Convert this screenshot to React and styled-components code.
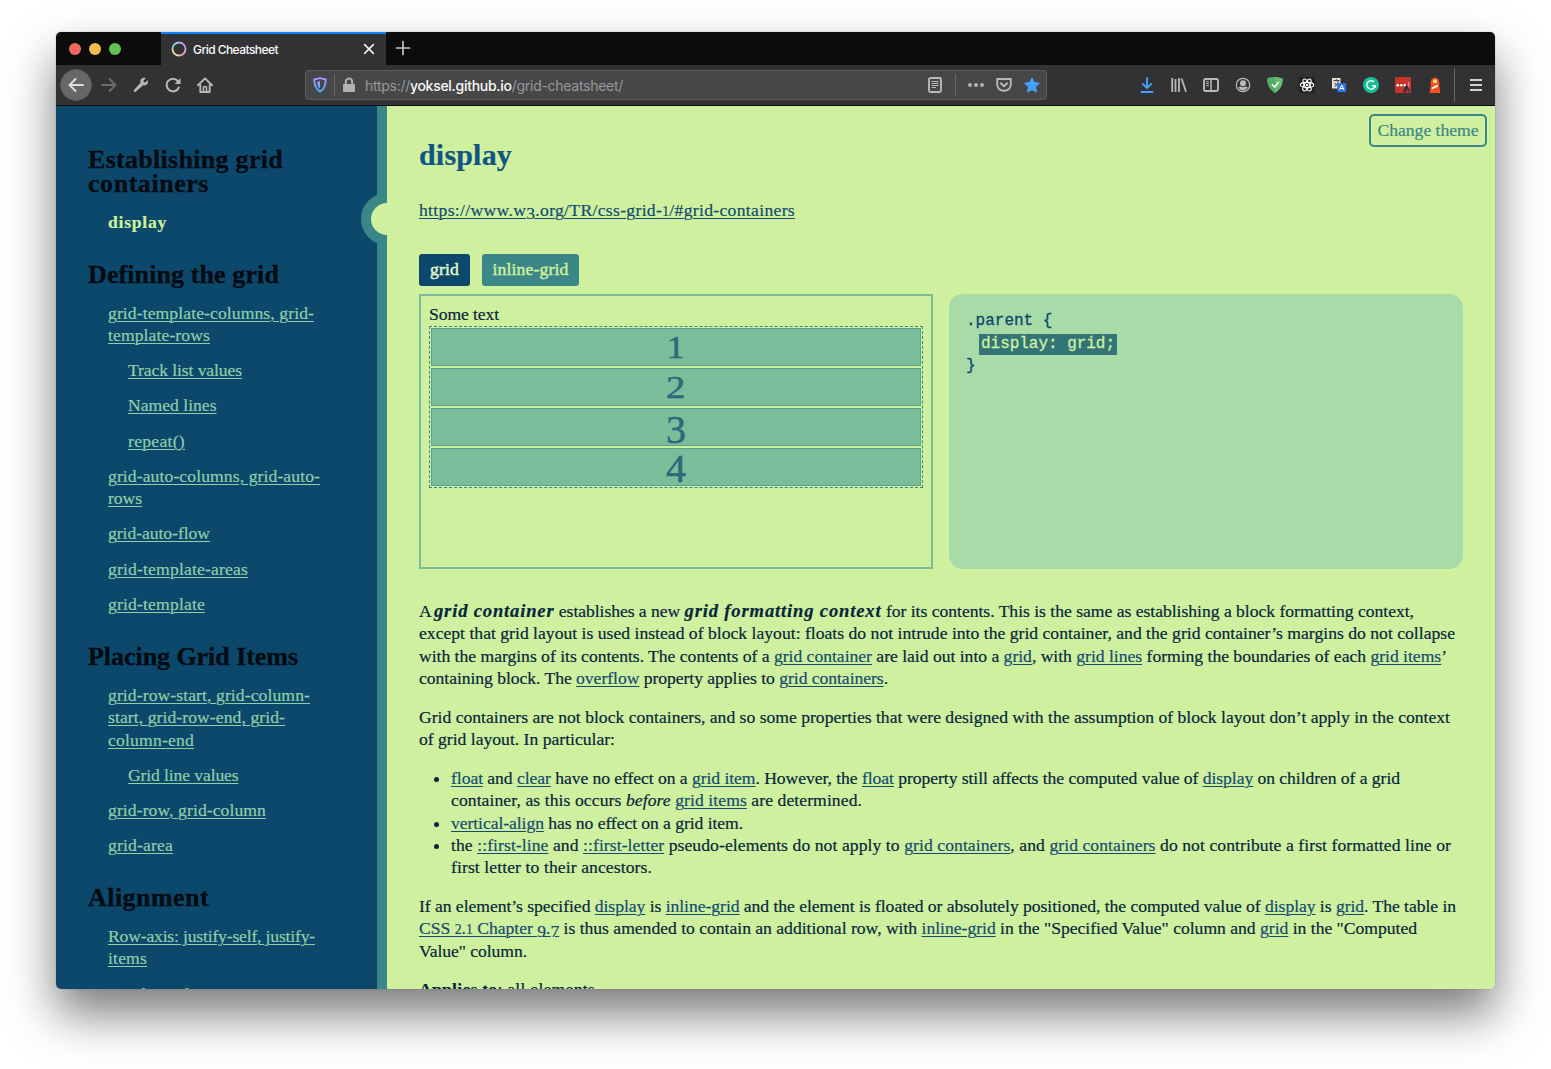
import React, { useLayoutEffect, useRef, useState } from 'react';
import styled, { createGlobalStyle } from 'styled-components';

const c = {
  navy: '#0b486b',
  teal: '#3b8686',
  green: '#79bd9a',
  mint: '#a8dba8',
  lime: '#cff09e',
  ink: '#06263c',
};
const serif = '"Liberation Serif", Georgia, serif';
const ui = 'Inter, Roboto, sans-serif';

const GlobalStyle = createGlobalStyle`
  * { box-sizing: border-box; }
  body { margin: 0; background: #fff; overflow: hidden; }
`;

/* ---------- text tracked to a given measure ---------- */
const FitSpan = styled.span`
  display: inline-block;
  white-space: pre;
`;
function Fit({ w, children }) {
  const ref = useRef(null);
  const [spacing, setSpacing] = useState(0);
  useLayoutEffect(() => {
    const el = ref.current;
    el.style.letterSpacing = '0px';
    const natural = el.getBoundingClientRect().width;
    const value = (w - natural) / el.textContent.length;
    el.style.letterSpacing = `${value}px`;
    setSpacing(value);
  }, [w]);
  return <FitSpan ref={ref} style={{ letterSpacing: `${spacing}px` }}>{children}</FitSpan>;
}

/* ---------- window frame ---------- */
const Desktop = styled.div`
  height: 1069px;
  padding: 32px 56px 80px;
`;
const Window = styled.div`
  width: 1439px;
  height: 957px;
  display: flex;
  flex-direction: column;
  border-radius: 5px;
  overflow: hidden;
  box-shadow: 0 0 1px rgba(0, 0, 0, 0.55), 0 25px 48px rgba(0, 0, 0, 0.52);
`;
const TabBar = styled.div`
  height: 33px;
  flex: none;
  display: flex;
  background: #0c0c0d;
`;
const Lights = styled.div`
  width: 105px;
  display: flex;
  align-items: center;
  gap: 8px;
  padding: 1px 0 0 13px;
`;
const Light = styled.span`
  width: 12px;
  height: 12px;
  border-radius: 50%;
  background: ${(p) => p.$color};
`;
const Tab = styled.div`
  width: 225px;
  display: flex;
  align-items: center;
  padding: 0 10px 1px;
  background: #323234;
  border-top: 2px solid #0a84ff;
  color: #f9f9fa;
  font: 500 12px ${ui};
`;
const TabTitle = styled.span`
  flex: 1;
  padding-left: 6px;
`;
const NewTab = styled.div`
  padding: 8px 0 0 9px;
`;
const Toolbar = styled.div`
  height: 41px;
  flex: none;
  display: flex;
  align-items: center;
  padding: 0 0 1px 4px;
  background: #323234;
  border-bottom: 1px solid #0c0c0d;
`;
const Cell = styled.div`
  width: 32px;
  height: 32px;
  flex: none;
  display: flex;
  align-items: center;
  justify-content: center;
`;
const BackButton = styled(Cell)`
  border-radius: 50%;
  background: #676769;
  border: 1px solid #59595b;
  margin-right: 1px;
`;
const UrlBar = styled.div`
  width: 742px;
  height: 30px;
  flex: none;
  margin: 0 84px 0 84px;
  display: flex;
  align-items: center;
  background: #474749;
  border: 1px solid #5b5b5e;
  border-radius: 3px;
`;
const Slot = styled.div`
  width: ${(p) => p.$w}px;
  display: flex;
  justify-content: center;
`;
const StarSlot = styled(Slot)`
  margin: 0 6px 0 12px;
`;
const Rule = styled.span`
  width: 1px;
  flex: none;
  height: ${(p) => p.$h}px;
  background: #66676b;
`;
const MenuRule = styled(Rule)`
  margin-left: 3px;
`;
const Url = styled.div`
  flex: 1;
  padding: 1px 0 0 2px;
  color: #98989b;
  font: 14px ${ui};
  b { color: #f9f9fa; font-weight: 500; }
`;
const MenuSlot = styled(Cell)`
  width: 41px;
`;

/* ---------- page ---------- */
const Page = styled.div`
  flex: 1;
  min-height: 0;
  display: flex;
  background: ${c.lime};
  font: 17.6px/22.4px ${serif};
`;
const Sidebar = styled.aside`
  position: relative;
  width: 331px;
  flex: none;
  padding: 42px 0 0 32px;
  overflow: hidden;
  background: linear-gradient(to right, ${c.navy} 321px, ${c.teal} 321px);
`;
const Marker = styled.span`
  position: absolute;
  top: 87px;
  right: -26px;
  width: 52px;
  height: 52px;
  border: 10px solid ${c.teal};
  border-radius: 50%;
  background: ${c.lime};
`;
const Section = styled.section`
  margin-bottom: 29.9px;
`;
const Heading = styled.h2`
  margin: 0 0 14.7px;
  font: 700 26px/24px ${serif};
  color: #030b12;
  -webkit-text-stroke: 0.3px currentColor;
`;
const HeadingLine = styled.span`
  display: block;
  height: 24px;
`;
const NavList = styled.ul`
  list-style: none;
  margin: 0;
  padding: 0 0 0 20px;
  display: flex;
  flex-direction: column;
  gap: 12.8px;
`;
const NavItem = styled.li`
  padding-left: ${(p) => (p.$sub ? 20 : 0)}px;
  height: ${(p) => p.$lines * 22.4}px;
`;
const NavLink = styled.a`
  color: ${(p) => (p.$active ? c.lime : '#8fcfa9')};
  font-weight: ${(p) => (p.$active ? 700 : 400)};
  -webkit-text-stroke: 0.2px currentColor;
`;
const NavLine = styled.span`
  display: block;
  height: 22.4px;
  & > span { text-decoration: ${(p) => (p.$plain ? 'none' : 'underline')}; text-underline-offset: 2px; text-decoration-thickness: 1px; }
`;

const Main = styled.main`
  position: relative;
  flex: 1;
  min-width: 0;
  overflow: hidden;
  padding: 32px 32px 0;
  color: ${c.ink};
  -webkit-text-stroke: 0.2px currentColor;
`;
const ThemeButton = styled.button`
  position: absolute;
  top: 8px;
  right: 8px;
  width: 118px;
  height: 33px;
  padding: 0;
  border: 2px solid ${c.teal};
  border-radius: 5px;
  background: transparent;
  color: ${c.teal};
  font: 17.6px ${serif};
  -webkit-text-stroke: 0.2px currentColor;
`;
const Title = styled.h1`
  height: 34px;
  margin: 0 0 27px;
  font: 700 30px/34px ${serif};
  color: #0f5482;
`;
const A = styled.a`
  color: #134b70;
  text-decoration: underline;
  text-decoration-thickness: 1px;
  text-underline-offset: 2px;
`;
const SpecLink = styled.div`
  height: 22px;
  margin-bottom: 33px;
`;
const Buttons = styled.div`
  display: flex;
  gap: 12px;
  margin-bottom: 8px;
`;
const ValueButton = styled.button`
  height: 32px;
  width: ${(p) => p.$w}px;
  padding: 0 0 1px;
  border: 0;
  border-radius: 3px;
  background: ${(p) => (p.$active ? c.navy : c.teal)};
  color: ${(p) => (p.$active ? '#e6f8cb' : c.lime)};
  font: 17.6px ${serif};
  -webkit-text-stroke: 0.45px currentColor;
`;
const Panels = styled.div`
  display: grid;
  grid-template-columns: 1fr 1fr;
  gap: 16px;
  height: 275px;
  margin-bottom: 31px;
`;
const Demo = styled.div`
  border: 2px solid ${c.green};
  padding: 8px;
`;
const DemoLabel = styled.div`
  height: 22px;
  line-height: 20.4px;
`;
const DemoGrid = styled.div`
  display: grid;
  gap: 2px;
  padding: 1px;
  border: 1px dashed ${c.teal};
`;
const DemoItem = styled.div`
  height: 38px;
  display: flex;
  align-items: flex-start;
  justify-content: center;
  background: ${c.green};
  border: 1px solid #5ca18d;
  color: #30687a;
  font-size: ${(p) => p.$size}px;
  line-height: 36px;
  -webkit-text-stroke: 0.5px currentColor;
`;
const DemoDigit = styled.span`
  transform: translateY(${(p) => p.$y}px) scaleX(${(p) => p.$sx});
`;
const Code = styled.pre`
  margin: 0;
  padding: 16px 17px;
  border-radius: 14px;
  background: ${c.mint};
  color: ${c.navy};
  font: 16px/22.6px "Liberation Mono", "Courier New", monospace;
  -webkit-text-stroke: 0.3px currentColor;
`;
const CodeMark = styled.span`
  display: inline-block;
  height: 21px;
  line-height: 20px;
  margin-left: 13px;
  padding: 0 2px;
  background: #337577;
  color: ${c.lime};
`;
const P = styled.p`
  margin: 0 0 16px;
`;
const Row = styled.span`
  display: block;
  height: 22.45px;
`;
const StrongTerm = styled.b`
  font-size: 18.6px;
  line-height: 0;
  font-style: italic;
`;
const List = styled.ul`
  margin: 0 0 16px;
  padding-left: 32px;
`;
const OldDigit = styled.span`
  font-size: ${(p) => (p.$low ? '1em' : '0.78em')};
  line-height: 0;
  vertical-align: ${(p) => (p.$low ? '-0.16em' : 'baseline')};
`;

function Line({ w, children }) {
  return <Row><Fit w={w}>{children}</Fit></Row>;
}

/* ---------- icons ---------- */
const Icon = ({ size = 16, color = '#b9b9bb', sw = 2, children }) => (
  <svg width={size} height={size} viewBox="0 0 16 16" fill="none" stroke={color} strokeWidth={sw} strokeLinecap="round" strokeLinejoin="round">
    {children}
  </svg>
);

const RightIcons = () => (
  <>
    <Cell><Icon color="#45a1ff" sw={1.9}><path d="M8 1v9.500M3.800 6.800L8 11l4.200-4.200M2.500 15h11" /></Icon></Cell>
    <Cell><Icon sw={1.8}><path strokeLinecap="butt" d="M1.200 1v14M4.500 2v13M8 1v14M10.500 1.500l4.500 13.200" /></Icon></Cell>
    <Cell><Icon sw={1.9}><rect x="1" y="2" width="14" height="12" rx="1.500" /><path strokeWidth="1.500" d="M8 2v12" /><path strokeWidth="1" d="M3.500 4.700h2M3.500 6.700h2M3.500 8.700h2" /></Icon></Cell>
    <Cell><Icon sw={1.2}><circle cx="8" cy="8" r="6.700" /><circle cx="8" cy="6.200" r="3" fill="#b9b9bb" stroke="none" /><path fill="#b9b9bb" stroke="none" d="M3.200 10.300c1 .2 1.900-.7 2.600-.7 1 .8 3.400.8 4.400 0 .7 0 1.600.9 2.600.7-1 2-2.700 3.100-4.800 3.100s-3.800-1.100-4.800-3.100z" /></Icon></Cell>
    <Cell><svg width="16" height="16" viewBox="0 0 16 16"><path fill="#68bc71" d="M8 0C5.500 0 2.500.6.200 1.800c0 2.600 0 9.200 7.800 14.200 7.800-5 7.800-11.600 7.800-14.200C13.500.6 10.500 0 8 0z" /><path fill="#4fa55c" d="M8 0C5.500 0 2.500.6.200 1.800c0 2.600 0 9.200 7.800 14.200z" opacity=".7" /><path d="M5 7.300l2.600 2.900L11.700 5" stroke="#fff" strokeWidth="1.500" fill="none" /></svg></Cell>
    <Cell><svg width="16" height="16" viewBox="0 0 16 16" fill="none" stroke="#fff" strokeWidth="1.100"><rect width="16" height="16" fill="#222224" stroke="none" /><ellipse cx="8" cy="8" rx="6.700" ry="2.600" /><ellipse cx="8" cy="8" rx="6.700" ry="2.600" transform="rotate(60 8 8)" /><ellipse cx="8" cy="8" rx="6.700" ry="2.600" transform="rotate(120 8 8)" /><circle cx="8" cy="8" r="1.300" fill="#fff" stroke="none" /></svg></Cell>
    <Cell><svg width="16" height="16" viewBox="0 0 16 16" fill="none"><rect x="1" y="1" width="8.500" height="10.500" fill="#e7e2d2" /><path d="M2.500 3.500h6M5.300 2v1.500M3.500 9.500c2-1 3.500-3 3.700-6M3.700 5.500c.8 2 2 3 3.800 4" stroke="#3e4143" strokeWidth="1" /><rect x="6.300" y="6.200" width="8.800" height="8.800" fill="#2f73e8" /><path d="M8.700 13l2-4.800h.3l2 4.800M9.400 11.500h2.900" stroke="#fff" strokeWidth="1" /></svg></Cell>
    <Cell><svg width="16" height="16" viewBox="0 0 16 16" fill="none"><circle cx="8" cy="8" r="8" fill="#15c39a" /><path d="M10.900 4.800A4.200 4.200 0 1 0 12.200 8.700H9" stroke="#fff" strokeWidth="1.400" /><path d="M12.300 8.200v2.600" stroke="#fff" strokeWidth="1" /></svg></Cell>
    <Cell><svg width="16" height="16" viewBox="0 0 16 16"><rect width="16" height="16" rx="1" fill="#c5352e" /><circle cx="2.800" cy="8.300" r="1.300" fill="#fff" /><circle cx="6.300" cy="8.300" r="1.300" fill="#fff" /><circle cx="9.800" cy="8.300" r="1.300" fill="#fff" /><path d="M13.700 5v5" stroke="#f2b0a8" strokeWidth=".8" /><path d="M8 15l1.600-4 1.500-3.200 1.600 1.700 2.300 5.500-1.800-.5-1.300-3-1.500 4.300z" fill="#24303f" /></svg></Cell>
    <Cell><svg width="16" height="16" viewBox="0 0 16 16"><path fill="#f4511e" d="M8 .2l4 2.500v3h.8v1.600H12l1.200 7.200V16H2.800v-1.500L4 7.300h-.8V5.700H4v-3z" /><circle cx="8" cy="4.300" r="2" fill="#ffe082" /><path fill="#fff" d="M5 10.200l5.700-2.500.2 2L4.600 12.600z" /></svg></Cell>
  </>
);

const nav = [
  { title: ['Establishing grid', 'containers'], widths: [195, 121], items: [{ lines: [['display', 59]], active: true }] },
  {
    title: ['Defining the grid'], widths: [191],
    items: [
      { lines: [['grid-template-columns, grid-', 206], ['template-rows', 102]] },
      { lines: [['Track list values', 114]], sub: true },
      { lines: [['Named lines', 88.5]], sub: true },
      { lines: [['repeat()', 57]], sub: true },
      { lines: [['grid-auto-columns, grid-auto-', 212], ['rows', 34]] },
      { lines: [['grid-auto-flow', 102]] },
      { lines: [['grid-template-areas', 140]] },
      { lines: [['grid-template', 97]] },
    ],
  },
  {
    title: ['Placing Grid Items'], widths: [210],
    items: [
      { lines: [['grid-row-start, grid-column-', 202], ['start, grid-row-end, grid-', 177], ['column-end', 86]] },
      { lines: [['Grid line values', 110.5]], sub: true },
      { lines: [['grid-row, grid-column', 158]] },
      { lines: [['grid-area', 65]] },
    ],
  },
  {
    title: ['Alignment'], widths: [121],
    items: [
      { lines: [['Row-axis: justify-self, justify-', 207], ['items', 39]] },
      { lines: [['Aligned', 62]], sub: true },
    ],
  },
];

const digits = [
  { n: 1, size: 31, y: 0.5, sx: 1.15 },
  { n: 2, size: 31, y: 0.5, sx: 1.25 },
  { n: 3, size: 40, y: 2.5, sx: 1 },
  { n: 4, size: 40, y: 2, sx: 1 },
];

export default function App() {
  return (
    <>
      <GlobalStyle />
      <Desktop>
        <Window>
          <TabBar>
            <Lights>
              <Light $color="#ee6a5f" /><Light $color="#f5bd4f" /><Light $color="#61c454" />
            </Lights>
            <Tab>
              <svg width="16" height="16" viewBox="0 0 16 16" fill="none" strokeWidth="1.800">
                <path d="M1.500 8A6.500 6.500 0 0 1 8 1.500" stroke="#86cfe6" />
                <path d="M8 1.500A6.500 6.500 0 0 1 14.500 8" stroke="#b7a0e8" />
                <path d="M14.500 8A6.500 6.500 0 0 1 8 14.500" stroke="#eba7c4" />
                <path d="M8 14.500A6.500 6.500 0 0 1 1.500 8" stroke="#f0d79a" />
              </svg>
              <TabTitle><Fit w={85}>Grid Cheatsheet</Fit></TabTitle>
              <Icon size={14} color="#f0f0f1" sw={1.9}><path d="M3 3l10 10M13 3L3 13" /></Icon>
            </Tab>
            <NewTab><Icon color="#c4c4c6" sw={1.7}><path d="M8 1.500v13M1.500 8h13" /></Icon></NewTab>
          </TabBar>
          <Toolbar>
            <BackButton><Icon color="#dededf" sw={1.9}><path d="M15 8H1.500M7.500 2L1.500 8l6 6" /></Icon></BackButton>
            <Cell><Icon color="#6c6c6e" sw={1.9}><path d="M1 8h13.500M8.500 2l6 6-6 6" /></Icon></Cell>
            <Cell><svg width="16" height="16" viewBox="0 0 16 16" fill="#b9b9bb"><path d="M14.700 3.200l-2.500 2.300-1.500-.3-.3-1.500 2.300-2.500C10.900.4 8.900.9 7.900 2.400c-.7 1-.7 2.200-.3 3.400L1.200 12.800c-.6.600-.6 1.400-.1 1.900s1.300.5 1.900-.1l7-6.300c1.200.3 2.400.2 3.400-.5 1.500-1 2-3 1.300-4.600z" /></svg></Cell>
            <Cell><Icon sw={2}><path d="M13.800 10.500A6.300 6.300 0 1 1 12.800 4" /><path d="M15.500 1v6H9.700z" fill="#b9b9bb" stroke="none" /></Icon></Cell>
            <Cell><Icon sw={1.9}><path d="M1 8.300L8 1.400l7 6.900M3.300 8v7h9.400V8" /><path strokeWidth="1.500" d="M6.500 14.500V9.800h3v4.700" /></Icon></Cell>
            <UrlBar>
              <Slot $w={28}>
                <svg width="16" height="16" viewBox="0 0 14 14" fill="none">
                  <defs><linearGradient id="sh" x1="0" y1="0" x2="0" y2="1"><stop offset="0" stopColor="#b98eff" /><stop offset="1" stopColor="#3fb4ff" /></linearGradient></defs>
                  <path d="M7 1c1.700.6 3.400.8 5 .9 0 4.300-.4 8.300-5 10.900C2.400 10.200 2 6.200 2 1.900c1.600-.1 3.300-.3 5-.9z" stroke="url(#sh)" strokeWidth="1.600" strokeLinejoin="round" />
                  <path d="M7 3.600v6.800C5.200 8.900 4.700 7.100 4.600 4.300c.9-.1 1.600-.3 2.400-.7z" fill="url(#sh)" />
                </svg>
              </Slot>
              <Rule $h={22} />
              <Slot $w={28}>
                <svg width="14" height="16" viewBox="0 0 14 16" fill="none"><path d="M3.800 8V4.800a3.200 3.200 0 0 1 6.400 0V8" stroke="#b1b1b3" strokeWidth="2" /><rect x="1" y="7" width="12" height="8" rx="1" fill="#b1b1b3" /></svg>
              </Slot>
              <Url><Fit w={258}>https://<b>yoksel.github.io</b>/grid-cheatsheet/</Fit></Url>
              <Slot $w={41}><Icon sw={1.9}><rect x="2" y="1" width="12" height="14" rx="1.500" /><path strokeWidth="1" d="M5 4.500h6M5 6.500h6M5 8.500h6M5 10.500h3.500" /></Icon></Slot>
              <Rule $h={22} />
              <Slot $w={40}><svg width="18" height="16" viewBox="0 0 18 16" fill="#b1b1b3"><circle cx="3" cy="8" r="2" /><circle cx="9" cy="8" r="2" /><circle cx="15" cy="8" r="2" /></svg></Slot>
              <Slot $w={16}><Icon sw={1.9}><path d="M1.200 2h13.600v5.500a6.800 6.300 0 0 1-13.600 0z" /><path d="M4.800 6.300L8 9.300l3.200-3" /></Icon></Slot>
              <StarSlot $w={16}><svg width="16" height="16" viewBox="0 0 16 16" fill="#45a1ff" stroke="#45a1ff" strokeLinejoin="round"><path d="M8 .8l2.200 4.700 5.100.7-3.700 3.600.9 5.300L8 12.600l-4.500 2.500.9-5.300L.7 6.200l5.100-.7z" /></svg></StarSlot>
            </UrlBar>
            <RightIcons />
            <MenuRule $h={34} />
            <MenuSlot><Icon color="#cfcfd1" sw={1.8}><path strokeLinecap="butt" d="M2 3h12M2 8h12M2 13h12" /></Icon></MenuSlot>
          </Toolbar>
          <Page>
            <Sidebar>
              <Marker />
              {nav.map((s) => (
                <Section key={s.title[0]}>
                  <Heading>
                    {s.title.map((t, i) => (
                      <HeadingLine key={t}><Fit w={s.widths[i]}>{t}</Fit></HeadingLine>
                    ))}
                  </Heading>
                  <NavList>
                    {s.items.map((it) => (
                      <NavItem key={it.lines[0][0]} $sub={it.sub} $lines={it.lines.length}>
                        <NavLink $active={it.active}>
                          {it.lines.map(([t, w]) => (
                            <NavLine key={t} $plain={it.active}><Fit w={w}>{t}</Fit></NavLine>
                          ))}
                        </NavLink>
                      </NavItem>
                    ))}
                  </NavList>
                </Section>
              ))}
            </Sidebar>
            <Main>
              <ThemeButton><Fit w={101}>Change theme</Fit></ThemeButton>
              <Title><Fit w={93}>display</Fit></Title>
              <SpecLink>
                <Fit w={376}><A>https://www.w<OldDigit $low>3</OldDigit>.org/TR/css-grid-<OldDigit>1</OldDigit>/#grid-containers</A></Fit>
              </SpecLink>
              <Buttons>
                <ValueButton $active $w={51}><Fit w={29}>grid</Fit></ValueButton>
                <ValueButton $w={97}><Fit w={76}>inline-grid</Fit></ValueButton>
              </Buttons>
              <Panels>
                <Demo>
                  <DemoLabel><Fit w={70}>Some text</Fit></DemoLabel>
                  <DemoGrid>
                    {digits.map((d) => (
                      <DemoItem key={d.n} $size={d.size}><DemoDigit $y={d.y} $sx={d.sx}>{d.n}</DemoDigit></DemoItem>
                    ))}
                  </DemoGrid>
                </Demo>
                <Code>
                  <div>.parent {'{'}</div>
                  <div><CodeMark><Fit w={134}>display: grid;</Fit></CodeMark></div>
                  <div>{'}'}</div>
                </Code>
              </Panels>
              <P>
                <Row>
                  <Fit w={15}>A </Fit>
                  <Fit w={120.5}><StrongTerm>grid container</StrongTerm></Fit>
                  <Fit w={130}> establishes a new </Fit>
                  <Fit w={197}><StrongTerm>grid formatting context</StrongTerm></Fit>
                  <Fit w={532.5}> for its contents. This is the same as establishing a block formatting context,</Fit>
                </Row>
                <Line w={1036}>except that grid layout is used instead of block layout: floats do not intrude into the grid container, and the grid container’s margins do not collapse</Line>
                <Line w={1028}>with the margins of its contents. The contents of a <A>grid container</A> are laid out into a <A>grid</A>, with <A>grid lines</A> forming the boundaries of each <A>grid items</A>’</Line>
                <Line w={469}>containing block. The <A>overflow</A> property applies to <A>grid containers</A>.</Line>
              </P>
              <P>
                <Line w={1031}>Grid containers are not block containers, and so some properties that were designed with the assumption of block layout don’t apply in the context</Line>
                <Line w={196}>of grid layout. In particular:</Line>
              </P>
              <List>
                <li>
                  <Line w={949}><A>float</A> and <A>clear</A> have no effect on a <A>grid item</A>. However, the <A>float</A> property still affects the computed value of <A>display</A> on children of a grid</Line>
                  <Line w={411}>container, as this occurs <i>before</i> <A>grid items</A> are determined.</Line>
                </li>
                <li><Line w={292}><A>vertical-align</A> has no effect on a grid item.</Line></li>
                <li>
                  <Line w={1000}>the <A>::first-line</A> and <A>::first-letter</A> pseudo-elements do not apply to <A>grid containers</A>, and <A>grid containers</A> do not contribute a first formatted line or</Line>
                  <Line w={201}>first letter to their ancestors.</Line>
                </li>
              </List>
              <P>
                <Line w={1037}>If an element’s specified <A>display</A> is <A>inline-grid</A> and the element is floated or absolutely positioned, the computed value of <A>display</A> is <A>grid</A>. The table in</Line>
                <Line w={998}><A>CSS <OldDigit>2</OldDigit>.<OldDigit>1</OldDigit> Chapter <OldDigit $low>9</OldDigit>.<OldDigit $low>7</OldDigit></A> is thus amended to contain an additional row, with <A>inline-grid</A> in the "Specified Value" column and <A>grid</A> in the "Computed</Line>
                <Line w={108}>Value" column.</Line>
              </P>
              <P><Line w={176}><b>Applies to</b>: all elements</Line></P>
            </Main>
          </Page>
        </Window>
      </Desktop>
    </>
  );
}
